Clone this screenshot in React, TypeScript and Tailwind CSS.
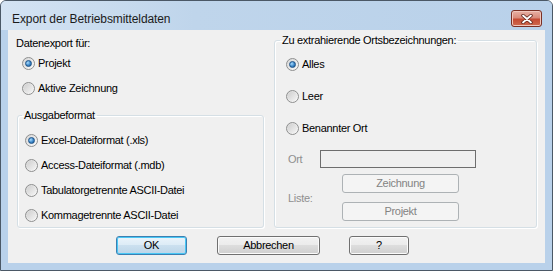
import React from "react";

function Radio({ checked, label }: { checked?: boolean; label: string }) {
  return (
    <div className="flex h-[14px] items-center">
      <span className="flex h-[13px] w-[13px] shrink-0 items-center justify-center rounded-full border border-[#8e8f8f] bg-[linear-gradient(135deg,#d6d6d6,#fbfbfb)]">
        {checked ? (
          <span className="h-[7px] w-[7px] rounded-full border border-[#1d5287] bg-[radial-gradient(circle_at_35%_35%,#a8dcff,#3b86c8_55%,#144f8a)]" />
        ) : (
          <span className="h-[9px] w-[9px] rounded-full bg-[linear-gradient(135deg,#cfcfcf,#f4f4f4)]" />
        )}
      </span>
      <span className="ml-[3px] leading-[14px]">{label}</span>
    </div>
  );
}

function DialogButton({ label, width, primary }: { label: string; width: string; primary?: boolean }) {
  return (
    <button
      className={
        primary
          ? `h-[19px] ${width} rounded-[3px] border border-[#3c7fb1] bg-[linear-gradient(#eaf4fb_0%,#dcebf6_50%,#cbe0ef_50%,#bcd5e8_100%)] shadow-[inset_0_0_0_1px_#48c7f5] leading-[15px]`
          : `h-[19px] ${width} rounded-[3px] border border-[#707070] bg-[linear-gradient(#f2f2f2_0%,#ebebeb_50%,#dddddd_50%,#cfcfcf_100%)] shadow-[inset_0_0_0_1px_#fbfbfb] leading-[15px]`
      }
    >
      {label}
    </button>
  );
}

function DisabledButton({ label }: { label: string }) {
  return (
    <button className="h-[19px] w-[117px] rounded-[3px] border border-[#adb2b5] bg-[#f4f4f4] leading-[15px] text-[#838383]">
      {label}
    </button>
  );
}

export default function App() {
  return (
    <div
      className="flex h-[271px] w-[553px] flex-col overflow-hidden rounded-t-[6px] border border-[#4b5866] bg-[#b9d1ea] text-[11px] tracking-[-0.3px] text-black"
      style={{ fontFamily: '"Liberation Sans", Arial, sans-serif' }}
    >
      {/* Title bar */}
      <div className="flex h-[29px] shrink-0 items-start justify-between bg-[linear-gradient(90deg,#d4e3f3,#bfd5eb_35%,#b9d1ea)] pl-[11px] pr-[10px]">
        <span className="mt-[11px] text-[12px] leading-[14px] tracking-[-0.1px] text-[#1b1b1b]">
          Export der Betriebsmitteldaten
        </span>
        <button className="mt-[9px] flex h-[17px] w-[31px] items-center justify-center rounded-[3px] border border-[#7a2f24] bg-[linear-gradient(#e8b1a5_0%,#d98b7b_45%,#c54b33_55%,#cf6a50_100%)] shadow-[inset_0_0_0_1px_#f0c6bc]">
          <svg width="12" height="10" viewBox="0 0 12 10">
            <path d="M2 1.5 L10 8.5 M10 1.5 L2 8.5" stroke="#5a2018" strokeWidth="3.4" strokeLinecap="round" />
            <path d="M2 1.5 L10 8.5 M10 1.5 L2 8.5" stroke="#ffffff" strokeWidth="1.8" strokeLinecap="round" />
          </svg>
        </button>
      </div>

      {/* Client area */}
      <div className="mx-[7px] flex h-[233px] shrink-0 flex-col bg-[#f0f0f0]">
        <div className="flex items-start pl-[8px]">
          {/* Left column */}
          <div className="flex w-[248px] flex-col pt-[6px]">
            <div className="leading-[14px]">Datenexport für:</div>
            <div className="mt-[6px] flex flex-col gap-[11px] pl-[6px]">
              <Radio checked label="Projekt" />
              <Radio label="Aktive Zeichnung" />
            </div>
            <fieldset className="ml-[1px] mt-[13px] rounded-[3px] border border-[#d5dfe5] px-[7px] pb-[5px] pt-[11px] shadow-[inset_1px_1px_0_#ffffff,1px_1px_0_#ffffff]">
              <legend className="ml-[-3px] px-[2px] leading-[14px]">Ausgabeformat</legend>
              <div className="flex flex-col gap-[11px]">
                <Radio checked label="Excel-Dateiformat (.xls)" />
                <Radio label="Access-Dateiformat (.mdb)" />
                <Radio label="Tabulatorgetrennte ASCII-Datei" />
                <Radio label="Kommagetrennte ASCII-Datei" />
              </div>
            </fieldset>
          </div>

          {/* Right group */}
          <fieldset className="ml-[10px] mt-[3px] w-[263px] rounded-[3px] border border-[#d5dfe5] pb-[6px] pl-[11px] pt-[10px] shadow-[inset_1px_1px_0_#ffffff,1px_1px_0_#ffffff]">
            <legend className="ml-[-6px] px-[2px] leading-[14px]">Zu extrahierende Ortsbezeichnungen:</legend>
            <div className="flex flex-col gap-[18px]">
              <Radio checked label="Alles" />
              <Radio label="Leer" />
              <Radio label="Benannter Ort" />
            </div>
            <div className="mt-[15px] flex items-center pl-[2px] text-[#8f8f8f]">
              <span className="w-[32px] leading-[14px]">Ort</span>
              <div className="h-[18px] w-[156px] border border-[#6e6e6e] bg-[#f0f0f0]" />
            </div>
            <div className="mt-[6px] flex items-center pl-[2px]">
              <span className="w-[54px] leading-[14px] text-[#8f8f8f]">Liste:</span>
              <div className="flex flex-col gap-[9px]">
                <DisabledButton label="Zeichnung" />
                <DisabledButton label="Projekt" />
              </div>
            </div>
          </fieldset>
        </div>

        {/* Dialog buttons */}
        <div className="mt-[8px] flex pl-[108px]">
          <DialogButton primary label="OK" width="w-[71px]" />
          <div className="ml-[30px]">
            <DialogButton label="Abbrechen" width="w-[103px]" />
          </div>
          <div className="ml-[29px]">
            <DialogButton label="?" width="w-[60px]" />
          </div>
        </div>
      </div>
    </div>
  );
}
